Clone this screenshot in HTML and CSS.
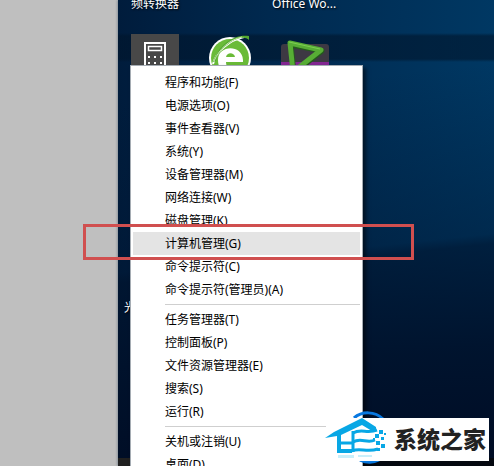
FILE: index.html
```
<!DOCTYPE html>
<html lang="zh-CN">
<head>
<meta charset="utf-8">
<title>桌面</title>
<link rel="stylesheet" href="styles.css">
</head>
<body>
<main class="screen">
  <div class="desktop">
    <div class="labels"><span class="label">频转换器</span><span class="label">Office Wo...</span></div>
    <div class="icons">
      <svg class="icon" viewBox="131 34 48 48" aria-hidden="true">
        <path fill="#484848" d="M131 34h48v48h-48z"/>
        <path fill="none" stroke="#fff" stroke-width="2" d="M145 43h20v30h-20z"/>
        <path fill="none" stroke="#fff" stroke-width="1.500" d="M148.500 46.500h13v4h-13z"/>
        <path fill="#fff" d="M148 56h2v2h-2zM154 56h2v2h-2zM160 56h2v2h-2zM148 62h2v2h-2zM154 62h2v2h-2zM160 62h2v2h-2z"/>
      </svg>
      <svg class="icon" viewBox="206 34 48 48" aria-hidden="true">
        <circle cx="230" cy="58" r="21" fill="#fff"/>
        <circle cx="230" cy="58" r="19" fill="#6abb38"/>
        <path fill="#fff" d="M218 60c0-15 24-16 25 0v2h-17c0 3 1 5 3 8h-8c-2-3-3-6-3-10z"/>
        <path fill="#6abb38" d="M226 57c1-5 8-5 9 0z"/>
        <path fill="none" stroke="#fff" stroke-width="2" d="M213 64c3-12 16-24 31-27"/>
        <path fill="#55a931" d="M213 62c6-18 21-28 36-26v4c-4-4-12-2-18 2-8 5-13 11-15 19z"/>
        <path fill="none" stroke="#c7e8ae" d="M214 61c6-13 15-21 28-24"/>
      </svg>
      <svg class="icon" viewBox="281 34 48 48" aria-hidden="true">
        <rect x="281" y="44" width="48" height="38" rx="3" fill="#3d3943"/>
        <path fill="#842793" d="M281 62h48v20h-48z"/>
        <path fill="none" stroke="#245b1c" stroke-width="5" stroke-linejoin="round" d="M291 45l31 6-28 22z"/>
        <path fill="none" stroke="#57ad35" stroke-width="5" stroke-linejoin="round" d="M290 43l31 7-28 22z"/>
        <path fill="none" stroke="#7dcd52" stroke-width="1" d="M289 42l31 7"/>
      </svg>
    </div>
    <span class="label hidden-label">光</span>
  </div>
</main>

<nav class="menu" aria-label="系统菜单">
  <button class="item">程序和功能(F)</button>
  <button class="item">电源选项(O)</button>
  <button class="item">事件查看器(V)</button>
  <button class="item">系统(Y)</button>
  <button class="item">设备管理器(M)</button>
  <button class="item">网络连接(W)</button>
  <button class="item">磁盘管理(K)</button>
  <button class="item active">计算机管理(G)</button>
  <button class="item">命令提示符(C)</button>
  <button class="item">命令提示符(管理员)(A)</button>
  <hr class="line">
  <button class="item">任务管理器(T)</button>
  <button class="item">控制面板(P)</button>
  <button class="item">文件资源管理器(E)</button>
  <button class="item">搜索(S)</button>
  <button class="item">运行(R)</button>
  <hr class="line">
  <button class="item">关机或注销(U)</button>
  <button class="item">桌面(D)</button>
</nav>
<div class="marker"></div>
<div class="brand">
  <svg class="logo" viewBox="322 408 68 58" aria-hidden="true">
    <path fill="none" stroke="#0878e0" stroke-width="3" d="M354 418c8-7 21-7 29 1M360 460c7 3 13 3 19 0"/>
    <path fill="#fff" d="M326 418h64v43h-64z"/>
    <path fill="#08a7e5" d="M325 438l9-6 28-14 14 9v3l-4 1-10-6-21 10v14h11v4h-15v-17z"/>
    <path fill="none" stroke="#08a7e5" stroke-width="3" d="M340 443h13M353 431v21"/>
    <path fill="none" stroke="#08a7e5" stroke-width="3" d="M353 433c8-5 14 1 24-3M353 442c8-5 14 2 22-2M352 451c8-4 14 2 26-2"/>
    <path fill="#08a7e5" d="M379 430h4v4h-4zM375 434h4v4h-4zM381 437h3v3h-3zM376 441h4v4h-4zM381 444h4v4h-4zM377 448h3v3h-3zM373 438h2v2h-2zM384 433h2v2h-2z"/>
    <path fill="#c9effa" d="M338 455h16v3h-16zM358 455h14v2h-14z"/>
  </svg>
  <strong class="name">系统之家</strong>
</div>
</body>
</html>
```
FILE: styles.css
```
* { box-sizing: border-box; }
body {
  margin: 0;
  position: relative;
  height: 100vh;
  overflow: hidden;
  background: #bfbfbf;
  font: 12px/16px "Noto Sans", "Noto Sans CJK SC", sans-serif;
}
.screen { height: 100%; padding-left: 118px; }
.desktop {
  position: relative;
  height: 100%;
  padding-left: 13px;
  box-shadow: -1px 0 2px #8b949c;
  background:
    linear-gradient(90deg, #202020, #202020 30%, #04080f 60%) 0 100% / 100% 8px no-repeat,
    linear-gradient(transparent 33px, #00152b99 36px, #00152b99 59px, transparent 62px),
    linear-gradient(174deg, transparent 20%, #00153066 54%, #00122ba6 56%, #001029e6 76%, #000c24 100%),
    linear-gradient(90deg, #001c3c, #00294f 40%, #003863);
}
.labels { display: flex; height: 34px; }
.label { color: #fff; text-shadow: 1px 1px 2px #000; line-height: 16px; margin-top: -4px; }
.labels .label + .label { margin-left: 93px; }
.icons { display: flex; gap: 27px; }
.icon { display: block; width: 48px; height: 48px; }
.hidden-label { position: absolute; left: 6px; top: 304px; }
.menu {
  position: absolute;
  left: 130px;
  top: 65px;
  width: 233px;
  padding: 5px 2px;
  border: 1px solid #a5acb3;
  background: #fff;
  box-shadow: 3px 3px 4px #0008;
}
.item {
  display: block;
  width: 100%;
  height: 23px;
  padding: 0 0 0 32px;
  border: 0;
  background: transparent;
  color: #000;
  font: inherit;
  text-align: left;
}
.active { background: #e4e4e4; }
.line { height: 1px; margin: 3px 0 3px 32px; border: 0; background: #cfcfcf; }
.marker {
  position: absolute;
  left: 83px;
  top: 224px;
  width: 331px;
  height: 36px;
  border: 3px solid #d04f4f;
}
.brand {
  position: absolute;
  right: 5px;
  bottom: 0;
  display: flex;
  width: 167px;
  height: 58px;
  background: linear-gradient(#fff, #fff) 100% 10px / 163px 43px no-repeat;
}
.logo { width: 68px; height: 58px; }
.name { margin: 14px 0 0 4px; font-size: 23px; line-height: 34px; font-weight: 900; color: #222; white-space: nowrap; }
```
